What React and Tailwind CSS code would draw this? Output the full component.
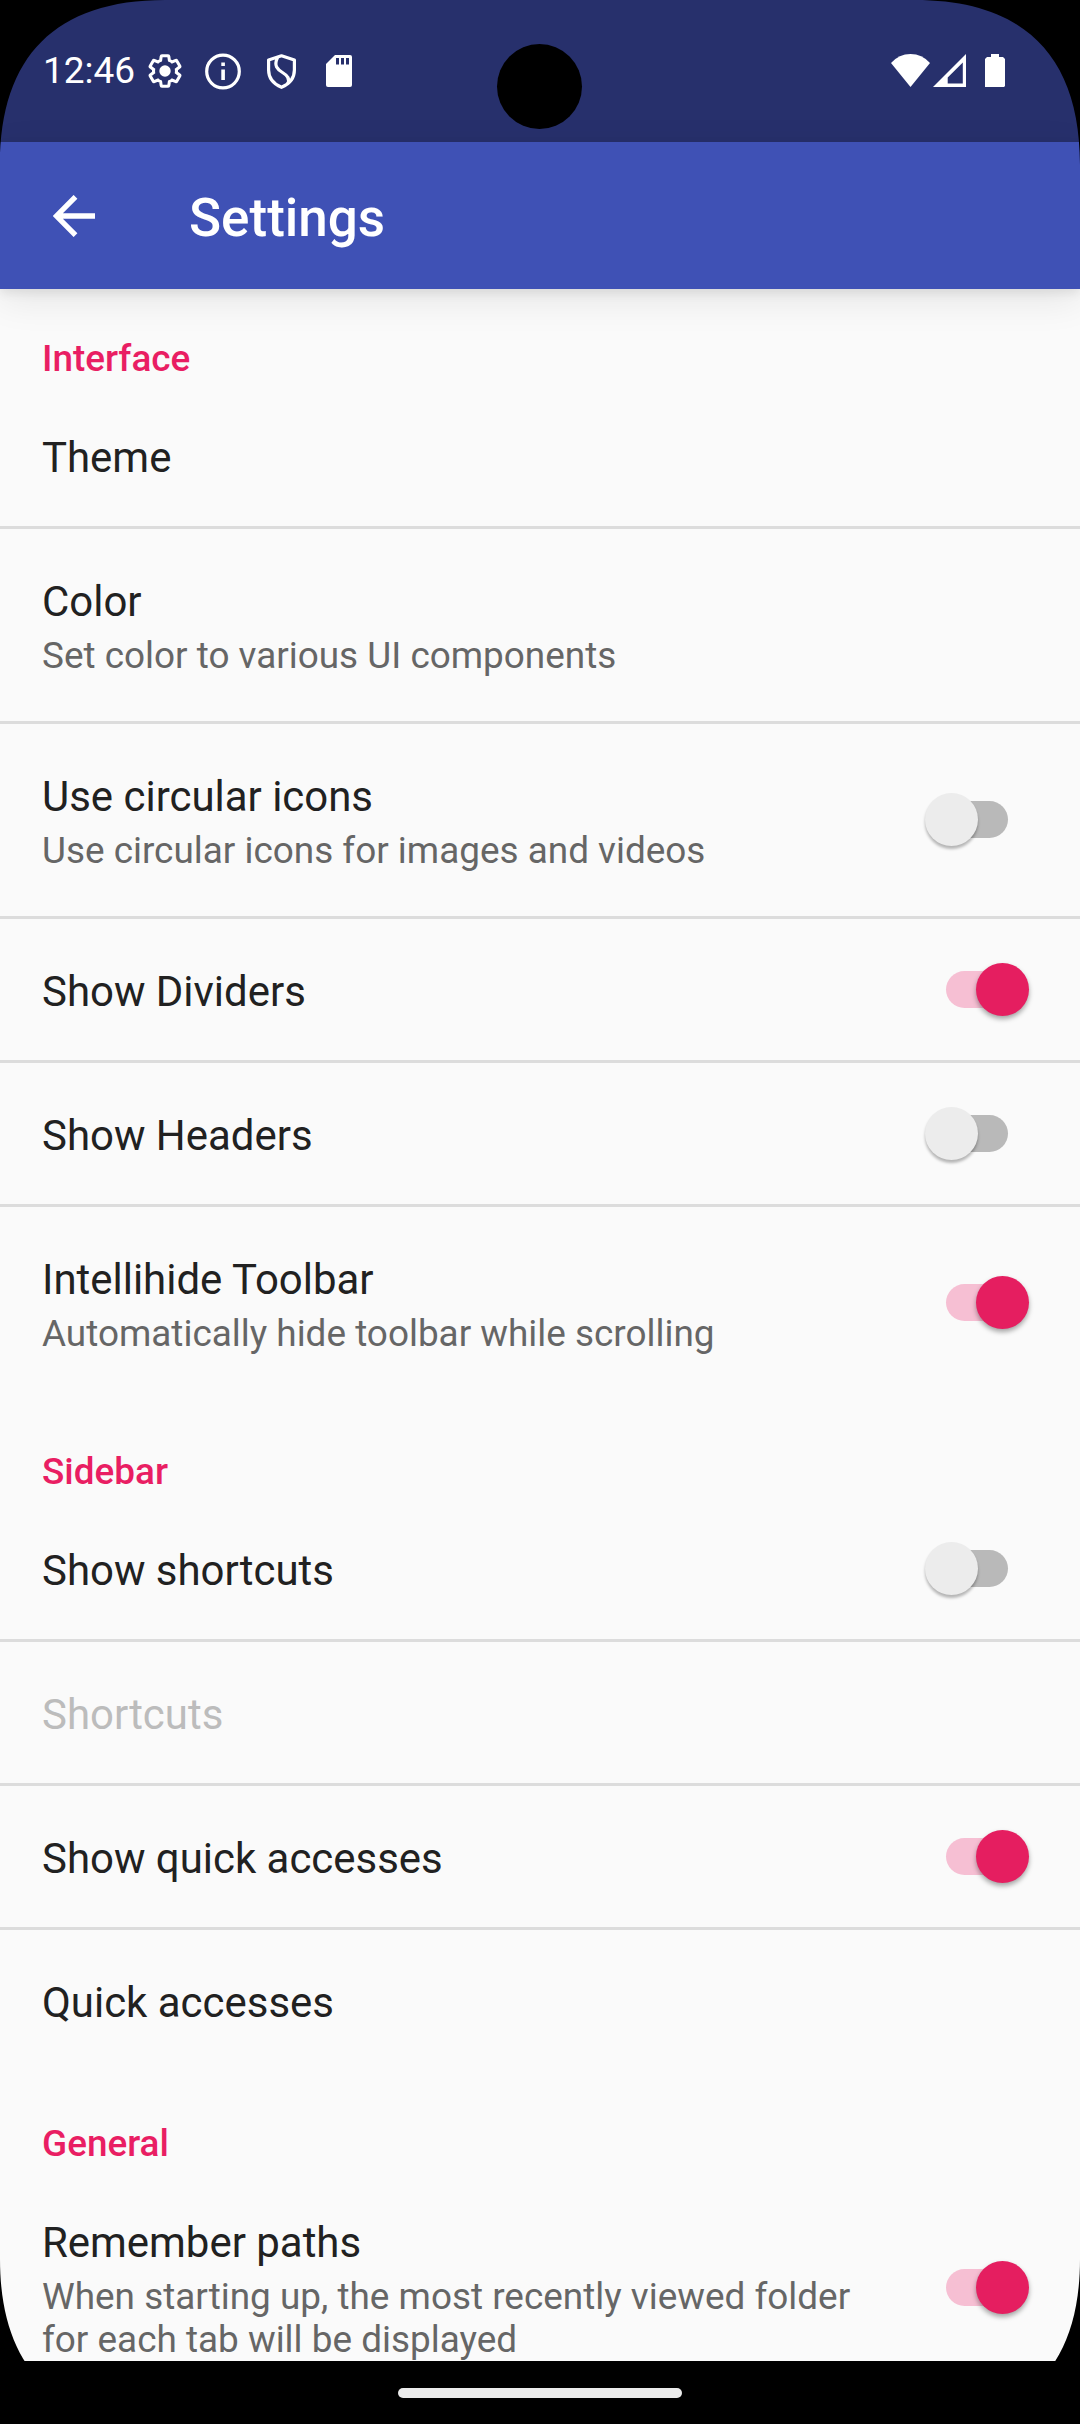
import React from "react";

const sections = [
  {
    title: "Interface",
    headerClass: "h-[96px] pt-[48px]",
    items: [
      { title: "Theme" },
      { title: "Color", summary: ["Set color to various UI components"] },
      { title: "Use circular icons", summary: ["Use circular icons for images and videos"], on: false },
      { title: "Show Dividers", on: true },
      { title: "Show Headers", on: false },
      { title: "Intellihide Toolbar", summary: ["Automatically hide toolbar while scrolling"], on: true },
    ],
  },
  {
    title: "Sidebar",
    headerClass: "h-[99px] pt-[51px]",
    items: [
      { title: "Show shortcuts", on: false },
      { title: "Shortcuts", disabled: true },
      { title: "Show quick accesses", on: true },
      { title: "Quick accesses" },
    ],
  },
  {
    title: "General",
    headerClass: "h-[99px] pt-[51px]",
    items: [
      {
        title: "Remember paths",
        summary: ["When starting up, the most recently viewed folder", "for each tab will be displayed"],
        on: true,
      },
    ],
  },
];

function Toggle({ on }) {
  if (on) {
    return (
      <div className="mr-[51px] flex h-[53px] w-[83px] items-center rounded-full">
        <div className="h-[37px] w-[50px] rounded-l-full bg-[#f6bfd3]" />
        <div className="-ml-[20px] size-[53px] shrink-0 rounded-full bg-[#e51e60] shadow-[0_3px_5px_rgba(0,0,0,0.35)]" />
      </div>
    );
  }
  return (
    <div className="mr-[72px] flex h-[53px] w-[83px] items-center rounded-full">
      <div className="z-10 size-[53px] shrink-0 rounded-full bg-[#ececec] shadow-[0_3px_3px_rgba(0,0,0,0.28)]" />
      <div className="-ml-[20px] h-[37px] w-[50px] rounded-r-full bg-[#b9b9b9]" />
    </div>
  );
}

function Row({ item, first }) {
  const height = !item.summary ? "h-[141px]" : item.summary.length > 1 ? "h-[235px]" : "h-[191px] mb-px";
  return (
    <div className={first ? "" : "border-t-[3px] border-[#dcdcdc]"}>
      <div className={"flex items-center justify-between pl-[42px] " + height}>
        <div className="self-start pt-[48px]">
          <div className={"text-[41.95px] leading-[49px] " + (item.disabled ? "text-[#bcbcbc]" : "text-[#212121]")}>
            {item.title}
          </div>
          {item.summary && (
            <div className="pt-[8px] text-[36.9px] leading-[43px] text-[#666666]">
              {item.summary.map((line) => (
                <div key={line}>{line}</div>
              ))}
            </div>
          )}
        </div>
        {item.on !== undefined && <Toggle on={item.on} />}
      </div>
    </div>
  );
}

function StatusBar() {
  return (
    <div className="flex h-[142px] shrink-0 items-start bg-[#27306c] pt-[52px] pl-[43px] text-white">
      <div className="-mt-[1px] h-[38px] w-[92px] text-[37px] leading-[40px] whitespace-nowrap">12:46</div>
      <svg className="ml-[13px] h-[38px] w-[36px]" viewBox="0 0 36 38">
        <path
          transform="translate(17 19) scale(1.530) translate(-12 -12)"
          fill="none"
          stroke="white"
          strokeWidth="2"
          d="M19.43 12.98c.04-.32.07-.64.07-.98s-.03-.66-.07-.98l2.11-1.65c.19-.15.24-.42.12-.64l-2-3.46c-.12-.22-.39-.3-.61-.22l-2.49 1c-.52-.4-1.08-.73-1.69-.98l-.38-2.65C14.46 2.18 14.25 2 14 2h-4c-.25 0-.46.18-.49.42l-.38 2.65c-.61.25-1.17.59-1.69.98l-2.49-1c-.23-.09-.49 0-.61.22l-2 3.46c-.13.22-.07.49.12.64l2.11 1.65c-.04.32-.07.65-.07.98s.03.66.07.98l-2.11 1.65c-.19.15-.24.42-.12.64l2 3.46c.12.22.39.3.61.22l2.49-1c.52.4 1.08.73 1.69.98l.38 2.65c.03.24.24.42.49.42h4c.25 0 .46-.18.49-.42l.38-2.65c.61-.25 1.17-.59 1.69-.98l2.49 1c.23.09.49 0 .61-.22l2-3.46c.12-.22.07-.49-.12-.64l-2.11-1.65z"
        />
        <circle cx="17" cy="19" r="5.700" fill="white" />
      </svg>
      <svg className="ml-[21px] h-[38px] w-[36px]" viewBox="0 0 36 38" fill="none">
        <circle cx="18" cy="19.500" r="16.300" stroke="white" strokeWidth="3.200" />
        <path d="M16.300 10.500h3.600v3.600h-3.600zM16.300 17.500h3.600V28h-3.600z" fill="white" />
      </svg>
      <svg className="ml-[25px] h-[38px] w-[32px]" viewBox="0 0 32 38" fill="none" stroke="white" strokeWidth="3.200">
        <path d="M15.500 3.800 28.400 8V18c0 8-5 14-12.900 17.300C7.600 32 2.600 26 2.600 18V8z" strokeLinejoin="round" />
        <path d="M11.500 5.500C7.500 14 11.500 17.500 16.500 20.500S24.500 27 21.500 32" />
      </svg>
      <svg className="ml-[28px] h-[38px] w-[26px]" viewBox="0 0 26 38">
        <path d="M9 3H24q2 0 2 2V33q0 2-2 2H2q-2 0-2-2V12z" fill="white" />
        <path d="M10 6h3v6.500h-3zM15 6h3v6.500h-3zM20 6h3v6.500h-3z" fill="#27306c" />
      </svg>
      <div className="mt-[-8px] ml-[145px] size-[85px] rounded-full bg-black" />
      <svg className="ml-[309px] h-[38px] w-[39px]" viewBox="0 0 39 38">
        <path d="M0 11Q8 2 19.500 2T39 11L19.500 35z" fill="white" />
      </svg>
      <svg className="ml-[3px] h-[38px] w-[34px]" viewBox="0 0 34 38">
        <path fillRule="evenodd" d="M33 2V35H0zM29.800 10.500 14.700 25.500V31.500H29.800z" fill="white" />
      </svg>
      <svg className="ml-[18px] h-[38px] w-[20px]" viewBox="0 0 20 38">
        <path d="M6 2h8v3h4l2 2V34l-1 1H0V7l2-2h4z" fill="white" />
      </svg>
    </div>
  );
}

const cornerPath = "M0 0H165C56 0 0 56 0 165Z";

export default function App() {
  return (
    <div
      className="relative flex h-[2424px] w-[1080px] flex-col overflow-hidden bg-[#fafafa]"
      style={{ fontFamily: 'Roboto, "Noto Sans", sans-serif' }}
    >
      <StatusBar />
      <header className="z-10 flex h-[147px] shrink-0 items-center bg-[#3f51b5] text-white shadow-[0_4px_10px_rgba(0,0,0,0.08),0_10px_36px_rgba(0,0,0,0.09)]">
        <svg className="ml-[53px] size-[42px]" viewBox="0 0 42 42" fill="none" stroke="white" strokeWidth="5.300">
          <path d="M42 21H4M22.500 1.800 3.500 21l19 19.200" />
        </svg>
        <h1 className="mt-[4px] ml-[94px] text-[53px] leading-[78px] font-medium">Settings</h1>
      </header>
      <main className="h-[2072px] shrink-0 overflow-hidden">
        {sections.map((section) => (
          <section key={section.title}>
            <h2 className={"pl-[42px] text-[36.9px] leading-[43px] font-medium text-[#e91e63] " + section.headerClass}>
              {section.title}
            </h2>
            {section.items.map((item, i) => (
              <Row key={item.title} item={item} first={i === 0} />
            ))}
          </section>
        ))}
      </main>
      <footer className="flex h-[63px] shrink-0 justify-center bg-black pt-[27px]">
        <div className="h-[10px] w-[284px] rounded-full bg-[#ebebeb]" />
      </footer>
      <svg className="absolute top-0 left-0 z-20 size-[165px]" viewBox="0 0 165 165">
        <path d={cornerPath} />
      </svg>
      <svg className="absolute top-0 right-0 z-20 size-[165px] -scale-x-100" viewBox="0 0 165 165">
        <path d={cornerPath} />
      </svg>
      <svg className="absolute bottom-0 left-0 z-20 size-[165px] -scale-y-100" viewBox="0 0 165 165">
        <path d={cornerPath} />
      </svg>
      <svg className="absolute right-0 bottom-0 z-20 size-[165px] -scale-100" viewBox="0 0 165 165">
        <path d={cornerPath} />
      </svg>
    </div>
  );
}
